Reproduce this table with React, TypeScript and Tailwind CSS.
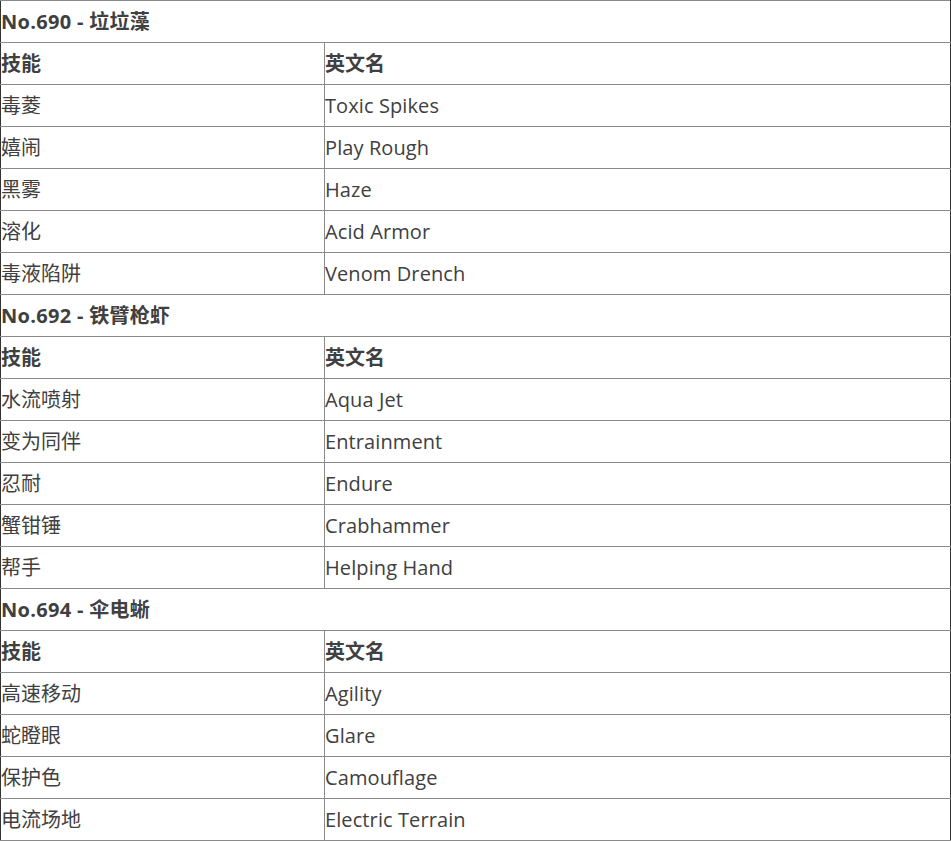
import React from 'react';

type Group = { title: string; moves: [string, string][] };

const groups: Group[] = [
  {
    title: 'No.690 - 垃垃藻',
    moves: [
      ['毒菱', 'Toxic Spikes'],
      ['嬉闹', 'Play Rough'],
      ['黑雾', 'Haze'],
      ['溶化', 'Acid Armor'],
      ['毒液陷阱', 'Venom Drench'],
    ],
  },
  {
    title: 'No.692 - 铁臂枪虾',
    moves: [
      ['水流喷射', 'Aqua Jet'],
      ['变为同伴', 'Entrainment'],
      ['忍耐', 'Endure'],
      ['蟹钳锤', 'Crabhammer'],
      ['帮手', 'Helping Hand'],
    ],
  },
  {
    title: 'No.694 - 伞电蜥',
    moves: [
      ['高速移动', 'Agility'],
      ['蛇瞪眼', 'Glare'],
      ['保护色', 'Camouflage'],
      ['电流场地', 'Electric Terrain'],
    ],
  },
];

const cell = 'h-[42px] border-b border-[#8a8a8a] p-0 align-middle';

export default function App() {
  return (
    <div className="w-[951px] bg-white text-[#404040] text-[20px] font-['Segoe_UI','Open_Sans','Noto_Sans_CJK_SC',sans-serif]">
      <table className="w-full border-collapse border-l border-r border-t border-l-[#333] border-r-[#333] border-t-[#8a8a8a]">
        <tbody>
          {groups.map((g) => (
            <React.Fragment key={g.title}>
              <tr>
                <td colSpan={2} className={`${cell} font-bold tracking-[0.3px]`}>
                  {g.title}
                </td>
              </tr>
              <tr className="font-bold">
                <td className={`${cell} w-[324px] border-r border-r-[#8a8a8a]`}>技能</td>
                <td className={cell}>英文名</td>
              </tr>
              {g.moves.map(([cn, en]) => (
                <tr key={en}>
                  <td className={`${cell} border-r border-r-[#8a8a8a]`}>{cn}</td>
                  <td className={`${cell} tracking-[0.1px]`}>{en}</td>
                </tr>
              ))}
            </React.Fragment>
          ))}
        </tbody>
      </table>
    </div>
  );
}
